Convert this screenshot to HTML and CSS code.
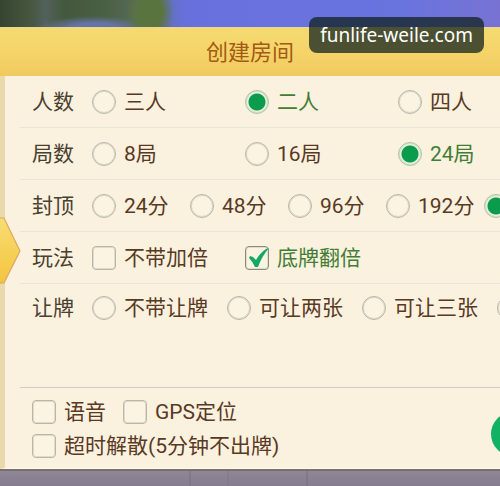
FILE: index.html
```html
<!DOCTYPE html>
<html lang="zh-CN">
<head>
<meta charset="utf-8">
<meta name="viewport" content="width=device-width, initial-scale=1">
<title>创建房间</title>
<link rel="stylesheet" href="styles.css">
</head>
<body>
<div class="scene">
  <a class="site" href="#">funlife-weile.com</a>
  <form class="room">
    <h1 class="title">创建房间</h1>
    <div class="panel">
      <svg class="tab" viewBox="0 0 22 68" aria-hidden="true">
        <defs><linearGradient id="gold" x1="0" y1="0" x2="0" y2="1"><stop offset="0" stop-color="#f8dd72"/><stop offset="1" stop-color="#f3c540"/></linearGradient></defs>
        <path d="M-2 1H4L20 34L4 66H-2Z" fill="url(#gold)" stroke="#dca860" stroke-width="1.2"/>
      </svg>
      <div class="row" role="group" aria-labelledby="g1">
        <span class="name" id="g1">人数</span>
        <div class="options thirds">
          <label class="option"><input type="radio" name="players">三人</label>
          <label class="option"><input type="radio" name="players" checked>二人</label>
          <label class="option"><input type="radio" name="players">四人</label>
        </div>
      </div>
      <div class="row" role="group" aria-labelledby="g2">
        <span class="name" id="g2">局数</span>
        <div class="options thirds">
          <label class="option"><input type="radio" name="rounds">8局</label>
          <label class="option"><input type="radio" name="rounds">16局</label>
          <label class="option"><input type="radio" name="rounds" checked>24局</label>
        </div>
      </div>
      <div class="row" role="group" aria-labelledby="g3">
        <span class="name" id="g3">封顶</span>
        <div class="options scores">
          <label class="option"><input type="radio" name="cap">24分</label>
          <label class="option"><input type="radio" name="cap">48分</label>
          <label class="option"><input type="radio" name="cap">96分</label>
          <label class="option"><input type="radio" name="cap">192分</label>
          <label class="option"><input type="radio" name="cap" checked></label>
        </div>
      </div>
      <div class="row" role="group" aria-labelledby="g4">
        <span class="name" id="g4">玩法</span>
        <div class="options thirds">
          <label class="option"><input type="checkbox">不带加倍</label>
          <label class="option"><input class="ticked" type="checkbox" checked><svg class="tick" viewBox="0 0 24 24" aria-hidden="true"><path d="M3 12L4 10L7 11L10 14Q14 7 20 3L23 2Q16 10 12 21L9 21Q7 16 3 12Z" fill="#12a866"/></svg>底牌翻倍</label>
        </div>
      </div>
      <div class="row last" role="group" aria-labelledby="g5">
        <span class="name" id="g5">让牌</span>
        <div class="options cards">
          <label class="option"><input type="radio" name="cards">不带让牌</label>
          <label class="option"><input type="radio" name="cards">可让两张</label>
          <label class="option"><input type="radio" name="cards">可让三张</label>
          <label class="option"><input type="radio" name="cards"></label>
        </div>
      </div>
      <div class="footer">
        <div class="extras">
          <div class="line">
            <label class="option"><input type="checkbox">语音</label>
            <label class="option"><input type="checkbox">GPS定位</label>
          </div>
          <div class="line">
            <label class="option"><input type="checkbox">超时解散(5分钟不出牌)</label>
          </div>
        </div>
        <button class="create" type="button" aria-label="创建"></button>
      </div>
    </div>
  </form>
  <div class="floor"></div>
</div>
</body>
</html>
```
FILE: styles.css
```css
* { box-sizing: border-box; }

body {
  margin: 0;
  font-family: Roboto, "Noto Sans CJK SC", sans-serif;
  font-size: 21px;
  line-height: 30px;
  color: #59391f;
}

.scene {
  position: relative;
  display: flex;
  flex-direction: column;
  min-height: 100vh;
  padding-top: 27px;
  overflow: hidden;
  background:
    radial-gradient(ellipse 24px 32px at 150px 12px, #5a7440 50%, transparent),
    radial-gradient(ellipse 56px 12px at 94px 28px, #6673a8 40%, transparent),
    linear-gradient(90deg, #36452f 0, #46563f 30px, #53615c 45px, #43583e 65px, #4a6044 105px, #566a55 135px, #6370bc 168px, #6870dc 185px, #6974df 400px, #7772d2 100%);
}

.site {
  position: absolute;
  z-index: 2;
  top: 17px;
  right: 16px;
  padding: 3px 11px;
  border-radius: 8px;
  background: rgba(16, 32, 30, 0.74);
  color: #fff;
  font-family: "Noto Sans", sans-serif;
  font-size: 19px;
  text-decoration: none;
}

.room { margin: 0; }

.title {
  margin: 0;
  height: 49px;
  border-top: 1px solid #e9d692;
  background: linear-gradient(#f4da72, #f5d468 50%, #f0ca60);
  color: #a35a17;
  font-size: 22px;
  font-weight: 400;
  line-height: 50px;
  text-align: center;
}

.panel {
  position: relative;
  border-left: 5px solid #ead9ac;
  border-bottom: 1px solid #fffbe8;
  padding-left: 15px;
  background: #fbf1df;
}

.tab {
  position: absolute;
  top: 141px;
  left: -5px;
  width: 22px;
  height: 68px;
}

.row {
  display: flex;
  align-items: center;
  height: 52px;
  padding-left: 12px;
  border-bottom: 1px solid #e6e7da;
}

.row.last {
  align-items: flex-start;
  height: 104px;
  padding-top: 9px;
  border-color: #d0cebd;
}

.name {
  flex: none;
  width: 60px;
  color: #49402f;
}

.options {
  display: grid;
  grid-auto-flow: column;
  flex: none;
}

.thirds { grid-auto-columns: 153px; }
.scores { grid-auto-columns: 98px; }
.cards { grid-auto-columns: 135px; }

.option {
  position: relative;
  display: flex;
  align-items: center;
  gap: 8px;
  white-space: nowrap;
}

.option:has(:checked) { color: #437d35; }

input {
  appearance: none;
  flex: none;
  width: 24px;
  height: 24px;
  margin: 0;
  border: 1px solid #b9b6a4;
  background: #fbf4e3;
}

input[type="radio"] {
  border-radius: 50%;
  box-shadow: inset 0 0 0 1px #dfdccb;
}

input[type="radio"]:checked {
  border-color: #a8c5a4;
  background: radial-gradient(circle, #0a9c4c 8px, #e9f5dd 9px);
}

input[type="checkbox"] {
  border-radius: 4px;
  box-shadow: inset 0 0 0 1px #e0dccb;
}

input.ticked { border-color: #8b8c78; }

.tick {
  position: absolute;
  left: 1px;
  width: 24px;
  height: 24px;
}

.footer {
  display: flex;
  align-items: center;
  justify-content: space-between;
  padding: 8px 0 6px 12px;
}

.extras {
  display: grid;
  gap: 2px;
}

.line {
  display: flex;
  align-items: center;
  gap: 17px;
  height: 32px;
}

.create {
  flex: none;
  width: 150px;
  height: 44px;
  margin: 10px -141px 0 0;
  padding: 0;
  border: 0;
  border-radius: 22px;
  background: #12b263;
}

.floor {
  flex: 1;
  min-height: 16px;
  border-top: 2px solid #77706f;
  background:
    linear-gradient(90deg, transparent 189px, #766f7d 190px, transparent 191px, transparent 227px, #7d7684 228px, transparent 229px, transparent 306px, #766f7d 307px, transparent 308px),
    linear-gradient(#8f8797, #857d8f);
}
```
